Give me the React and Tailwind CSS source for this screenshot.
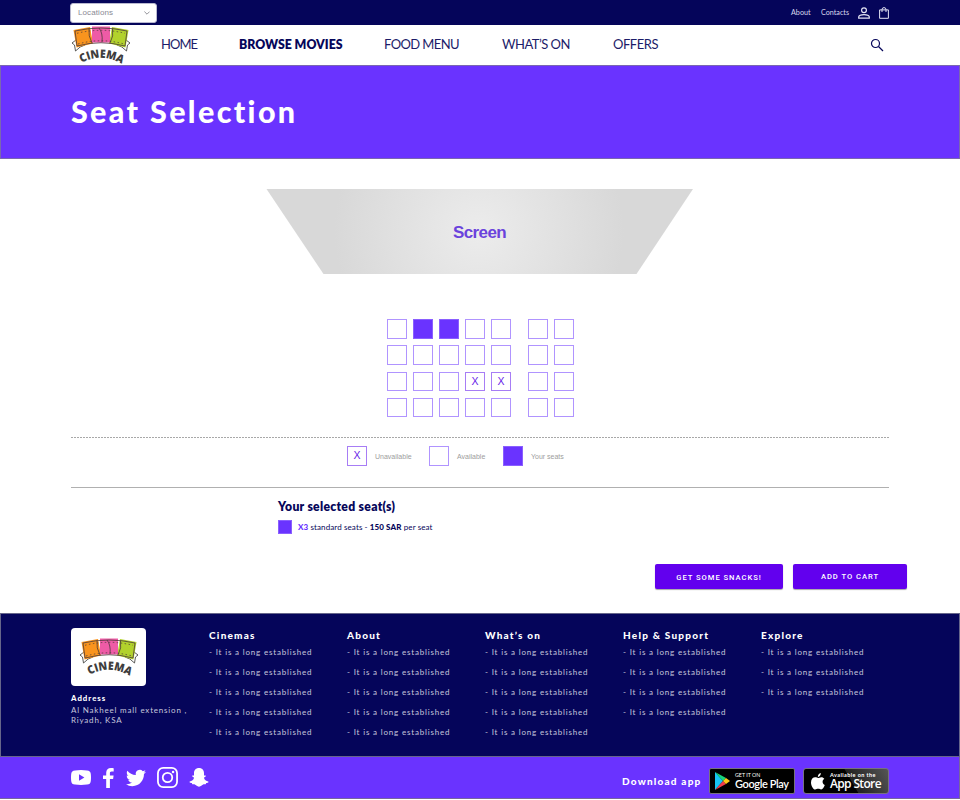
import React from "react";

function CinemaLogo({ className }) {
  const arc = React.useId();
  return (
    <svg viewBox="0 0 60 38" className={`shrink-0 overflow-visible ${className}`}>
      <g fill="none" stroke="#4a4a46" strokeWidth="0.9">
        <path d="M5 14 L1 17 L3.500 19 L4.500 25 Q9 20 14 19" />
        <path d="M55 14 L59 17 L56.500 19 L55.500 25 Q51 20 46 19" />
      </g>
      <path d="M2.500 4 L19 1 L22 17.500 L5.500 21.500 Z" fill="#f9941e" />
      <path d="M41 1 L57.500 4 L54.500 21.500 L38 17.500 Z" fill="#b2d22c" />
      <path d="M21 0.500 H39 V16.500 H21 Z" fill="#ee5ba6" />
      <g fill="none" stroke="#4a3a3a" strokeWidth="0.8">
        <path d="M4 5 Q30 -1 56 5" />
        <path d="M6 20 Q30 13.500 54 20" />
        <path d="M4 5 L6 20 M56 5 L54 20" />
        <path d="M18 2.500 Q17 10 21 17 M41.500 2.500 Q43 10 39 17 M28 2 Q32 7 31 16" />
        <path d="M6 7.300 Q30 1.300 54 7.300" strokeDasharray="1.500 2.500" />
        <path d="M7 18 Q30 11.500 53 18" strokeDasharray="1.500 2.500" />
      </g>
      <path id={arc} d="M10.500 37 Q30 26 51 38" fill="none" />
      <text fontFamily="'Open Sans', sans-serif" fontWeight="800" fontSize="11.5" fill="#3d3d3d">
        <textPath href={`#${arc}`} textLength="42.5" lengthAdjust="spacingAndGlyphs">CINEMA</textPath>
      </text>
    </svg>
  );
}

function Seat({ type = "free", className = "" }) {
  const look = {
    free: "border-[#b094ff]",
    taken: "border-[#a77df5]",
    mine: "border-[#8a5fff] bg-[#6a33ff]",
  }[type];
  return (
    <div className={`flex w-5 shrink-0 items-center justify-center border font-['Liberation_Sans',sans-serif] text-[10.5px] text-[#6a1fe8] ${look} ${className}`}>
      {type === "taken" ? "X" : ""}
    </div>
  );
}

const seatRows = [
  { h: "h-5 mb-1.5", seats: ["free", "mine", "mine", "free", "free", "free", "free"] },
  { h: "h-5 mb-[7px]", seats: ["free", "free", "free", "free", "free", "free", "free"] },
  { h: "h-[19px] mb-[7px]", seats: ["free", "free", "free", "taken", "taken", "free", "free"] },
  { h: "h-[19px]", seats: ["free", "free", "free", "free", "free", "free", "free"] },
];

const columns = [
  { title: "Cinemas", count: 5 },
  { title: "About", count: 5 },
  { title: "What’s on", count: 5 },
  { title: "Help & Support", count: 4 },
  { title: "Explore", count: 3 },
];

function Socials() {
  return (
    <div className="flex h-[41px] w-[551px] items-center text-white">
      <svg viewBox="0 0 20 15" className="h-[15px] w-[20px]" fill="currentColor">
        <path fillRule="evenodd" d="M4 .4Q10-.2 16 .4Q19.500.5 19.800 4Q20.200 7.500 19.800 11Q19.500 14.500 16 14.600Q10 15.200 4 14.600Q.5 14.500.2 11Q-.2 7.500.2 4Q.5.5 4 .4ZM8 4.300V10.700L13.400 7.500Z" />
      </svg>
      <svg viewBox="0 0 11 20" className="ml-3 h-5 w-[11px]" fill="currentColor">
        <path d="M3.200 20V11H0V7.400H3.200V4.700C3.200 1.600 5.100 0 7.900 0C9.200 0 10.300.1 10.700.2V3.400H8.700C7.200 3.400 6.900 4.100 6.900 5.200V7.400H10.600L10.100 11H6.900V20Z" />
      </svg>
      <svg viewBox="0 0 24 24" className="ml-3 h-[20px] w-[20px]" fill="currentColor">
        <path d="M23.950 4.570a10 10 0 0 1-2.820.77 4.960 4.960 0 0 0 2.160-2.720c-.95.55-2 .95-3.130 1.180a4.920 4.920 0 0 0-8.380 4.480C7.690 8.090 4.070 6.130 1.640 3.160a4.820 4.820 0 0 0-.67 2.480c0 1.710.87 3.210 2.190 4.100a4.900 4.900 0 0 1-2.230-.62v.06a4.920 4.920 0 0 0 3.950 4.830 5 5 0 0 1-2.210.08 4.940 4.940 0 0 0 4.600 3.420A9.870 9.870 0 0 1 0 19.540a13.990 13.990 0 0 0 7.550 2.210c9.050 0 14-7.500 14-13.980 0-.21 0-.42-.02-.63a9.940 9.940 0 0 0 2.460-2.550z" />
      </svg>
      <svg viewBox="0 0 20 20" className="ml-[11px] h-[21px] w-[21px]" fill="none" stroke="currentColor" strokeWidth="1.700">
        <rect x="0.900" y="0.900" width="18.200" height="18.200" rx="5" />
        <circle cx="10" cy="10" r="4.500" />
        <circle cx="15.300" cy="4.700" r="1.200" fill="currentColor" stroke="none" />
      </svg>
      <svg viewBox="0 0 20 19" className="ml-[11px] h-[19px] w-[20px]" fill="currentColor">
        <path d="M10 0C13.200 0 15 2.200 15 5V7.500C15.500 7.800 16.300 7.200 16.800 7.700C17.200 8.600 15.300 9 15 9.700C15.300 11.800 17.200 13 19.300 13.600C20 14.500 18.200 14.900 17.200 15.100L16.700 16.300C14.300 15.900 13.800 16.500 12.700 17.600Q10 19.700 7.300 17.600C6.200 16.500 5.700 15.900 3.300 16.300L2.800 15.100C1.800 14.900 0 14.500.7 13.600C2.800 13 4.700 11.800 5 9.700C4.700 9 2.800 8.600 3.200 7.700C3.700 7.200 4.500 7.800 5 7.500V5C5 2.200 6.800 0 10 0Z" />
      </svg>
    </div>
  );
}

export default function App() {
  return (
    <div className="h-[800px] w-[960px] overflow-hidden bg-white font-[Lato,sans-serif] text-[#06065a]">
      <div className="flex h-[25px] items-center bg-[#05055a] pl-[70px]">
        <div className="flex h-[20px] w-[87px] items-center justify-between rounded-[3px] border border-[#b9b9d0] bg-white pr-[6px] pl-[7px] font-['Liberation_Sans',sans-serif] text-[8px] text-[#8a8a94]">
          <span className="tracking-[0.100px]">Locations</span>
          <svg viewBox="0 0 6 4" className="h-1 w-1.5" fill="none" stroke="#77777f" strokeWidth="0.800">
            <path d="M.4.600L3 3.200L5.600.600" />
          </svg>
        </div>
        <span className="mt-[2px] ml-[634px] w-[30px] text-[7.200px] text-[#d9d9ee]">About</span>
        <span className="mt-[2px] w-[37px] text-[7.200px] text-[#d9d9ee]">Contacts</span>
        <svg viewBox="0 0 12 12" className="h-3 w-3 shrink-0" fill="none" stroke="#e4e4f4" strokeWidth="1.200">
          <circle cx="6" cy="3.200" r="2.400" />
          <path d="M.7 11.100V9.800Q1.200 7.600 6 7.600Q10.800 7.600 11.300 9.800V11.100Z" />
        </svg>
        <svg viewBox="0 0 10 12" className="ml-[9px] h-3 w-2.5 shrink-0" fill="none" stroke="#e4e4f4" strokeWidth="1">
          <path d="M.6 2.900H9.400V11.300H.6ZM3 5V2.700Q3 .6 5 .6Q7 .6 7 2.700V5" />
        </svg>
      </div>

      <nav className="flex h-10 items-center pl-[71px] text-[13px] whitespace-nowrap text-[#1c1c69]">
        <CinemaLogo className="h-[38px] w-[60px]" />
        <a className="ml-[30px] w-[78px] shrink-0 tracking-[-0.950px]">HOME</a>
        <a className="w-[145px] shrink-0 text-[12.300px] font-extrabold text-[#06065a]">BROWSE MOVIES</a>
        <a className="w-[118px] shrink-0 tracking-[-0.600px]">FOOD MENU</a>
        <a className="w-[111px] shrink-0 tracking-[-0.500px]">WHAT’S ON</a>
        <a className="w-[257px] shrink-0 tracking-[-0.450px]">OFFERS</a>
        <svg viewBox="0 0 14 14" className="h-[14px] w-[14px] shrink-0" fill="none" stroke="#06065a" strokeWidth="1.200">
          <circle cx="5.500" cy="5.500" r="4" />
          <path d="M8.500 8.500L13 13" />
        </svg>
      </nav>

      <header className="flex h-[94px] items-center border border-[#7a68b0] bg-[#6a33ff] pl-[70px]">
        <h1 className="text-[30.500px] font-black tracking-[2.350px] text-white">Seat Selection</h1>
      </header>

      <main className="h-[454px] pt-[30px]">
        <div className="relative ml-[266px] h-[85px] w-[427px]">
          <svg viewBox="0 0 427 85" className="h-full w-full">
            <defs>
              <radialGradient id="screen-glow" gradientUnits="userSpaceOnUse" cx="213" cy="42" r="145">
                <stop offset="0" stopColor="#ececec" />
                <stop offset="1" stopColor="#d8d8d8" />
              </radialGradient>
            </defs>
            <path d="M.5 0H427L370.500 85H57.500Z" fill="url(#screen-glow)" />
          </svg>
          <span className="absolute inset-0 flex items-center justify-center pt-[2px] font-['Liberation_Sans',sans-serif] text-[17px] font-bold tracking-[-0.600px] text-[#6a42dc]">Screen</span>
        </div>

        <div className="mt-[45px] ml-[387px]">
          {seatRows.map((row, r) => (
            <div key={r} className={`flex gap-1.5 ${row.h}`}>
              {row.seats.map((s, i) => (
                <Seat key={i} type={s} className={i === 5 ? "ml-[11px]" : ""} />
              ))}
            </div>
          ))}
        </div>

        <div className="mx-[71px] mt-5 h-px bg-[repeating-linear-gradient(90deg,#a8a8a8_0_2px,#fff_2px_3px)]" />
        <div className="mt-2 ml-[347px] flex h-5 items-center font-['Liberation_Sans',sans-serif] text-[7px] text-[#9d9d9d]">
          <Seat type="taken" className="h-5" />
          <span className="ml-2 w-[54px] pt-[2px]">Unavailable</span>
          <Seat className="h-5" />
          <span className="ml-2 w-[46px] pt-[2px]">Available</span>
          <Seat type="mine" className="h-5" />
          <span className="ml-2 pt-[2px]">Your seats</span>
        </div>
        <div className="mx-[71px] mt-[21px] h-px bg-[#b0b0b0]" />

        <section className="ml-[278px] pt-[10px]">
          <h2 className="h-4 text-[12.200px] leading-[17px] font-extrabold tracking-[0.280px]">Your selected seat(s)</h2>
          <div className="mt-1.5 flex h-[14px] items-center text-[8px] tracking-[0.110px] whitespace-pre">
            <div className="mr-1.5 h-[14px] w-[14px] border border-[#8a5fff] bg-[#6a33ff]" />
            <div>
              <b className="font-black text-[#6a33ff]">X3</b> standard seats - <b className="font-black">150 SAR</b> per seat
            </div>
          </div>
        </section>

        <div className="mt-[30px] ml-[655px] flex gap-[10px] font-[Roboto,sans-serif] text-[7.600px] font-medium text-white">
          <button className="h-[25px] w-[128px] rounded-[2px] bg-[#6200ee] pt-[2px] tracking-[0.970px] shadow-[0_1px_1px_rgba(0,0,0,0.350)]">GET SOME SNACKS!</button>
          <button className="h-[25px] w-[114px] rounded-[2px] bg-[#6200ee] tracking-[0.970px] shadow-[0_1px_1px_rgba(0,0,0,0.350)]">ADD TO CART</button>
        </div>
      </main>

      <footer>
        <div className="flex h-[144px] border border-[#66668a] bg-[#05055a] pt-[14px] pl-[70px] text-white">
          <div className="w-[138px]">
            <div className="flex h-[58px] w-[75px] items-center justify-center rounded-[4px] bg-white">
              <CinemaLogo className="h-[38px] w-[60px]" />
            </div>
            <div className="mt-[7px] text-[7.800px] leading-[10px] font-black tracking-[1px]">Address</div>
            <p className="mt-[2px] text-[8px] leading-[10px] tracking-[0.800px] whitespace-nowrap text-[#c5c5dc]">
              Al Nakheel mall extension ,<br />Riyadh, KSA
            </p>
          </div>
          {columns.map((c) => (
            <div key={c.title} className="-mt-px w-[138px] whitespace-nowrap">
              <h3 className="text-[10px] leading-[16px] font-black tracking-[1.220px]">{c.title}</h3>
              <ul className="-mt-px text-[8px] leading-[20px] tracking-[0.820px] text-[#c5c5dc]">
                {Array.from({ length: c.count }, (_, i) => (
                  <li key={i}>- It is a long established</li>
                ))}
              </ul>
            </div>
          ))}
        </div>

        <div className="flex h-[42px] border-r border-b border-[#77669f] bg-[#6a33ff] pl-[71px] text-white">
          <Socials />
          <span className="mt-4 w-[87px] text-[10px] leading-[16px] font-black tracking-[1.200px] whitespace-nowrap">Download app</span>
          <div className="mt-[11px] flex h-[26px] w-[86px] items-center rounded-[2px] border border-[#77727f] bg-black pl-[5px]">
            <svg viewBox="0 0 15 18" className="h-[18px] w-[15px] shrink-0">
              <path d="M0 0V18L8 9Z" fill="#16c4f5" />
              <path d="M0 0L11 6L8 9Z" fill="#18d67a" />
              <path d="M0 18L11 12L8 9Z" fill="#f23b4c" />
              <path d="M11 6L15 9L11 12L8 9Z" fill="#ffc914" />
            </svg>
            <div className="ml-[5px] whitespace-nowrap">
              <div className="text-[5.300px] leading-[6px]">GET IT ON</div>
              <div className="text-[11px] leading-[12px] font-semibold tracking-[-0.400px]">Google Play</div>
            </div>
          </div>
          <div className="mt-[11px] ml-2 flex h-[26px] w-[86px] items-center rounded-[3px] border border-[#77727f] bg-[linear-gradient(60deg,#000_55%,#222_56%,#555)] pl-[7px]">
            <svg viewBox="0 0 14 17" className="h-[17px] w-[14px] shrink-0" fill="white">
              <path d="M9.800 0C10 1.700 8.800 3.700 6.900 3.900C6.600 2.200 8 .4 9.800 0ZM7.200 5C8 5 8.800 4.200 10.300 4.200C11.500 4.200 12.700 4.800 13.300 5.800C10.800 7.300 11.200 10.900 13.800 12C13.100 14 11.700 16.500 10.200 16.500C9 16.500 8.600 15.800 7.200 15.800C5.800 15.800 5.300 16.500 4.200 16.500C2.300 16.500 0 12.700 0 9.400C0 6.200 2 4.300 4.200 4.300C5.500 4.300 6.400 5 7.200 5Z" />
            </svg>
            <div className="ml-[5px] whitespace-nowrap">
              <div className="text-[5.500px] leading-[6px] font-bold tracking-[0.420px]">Available on the</div>
              <div className="font-['Open_Sans',sans-serif] text-[12px] leading-[12px] font-semibold tracking-[-0.650px]">App Store</div>
            </div>
          </div>
        </div>
      </footer>
    </div>
  );
}
